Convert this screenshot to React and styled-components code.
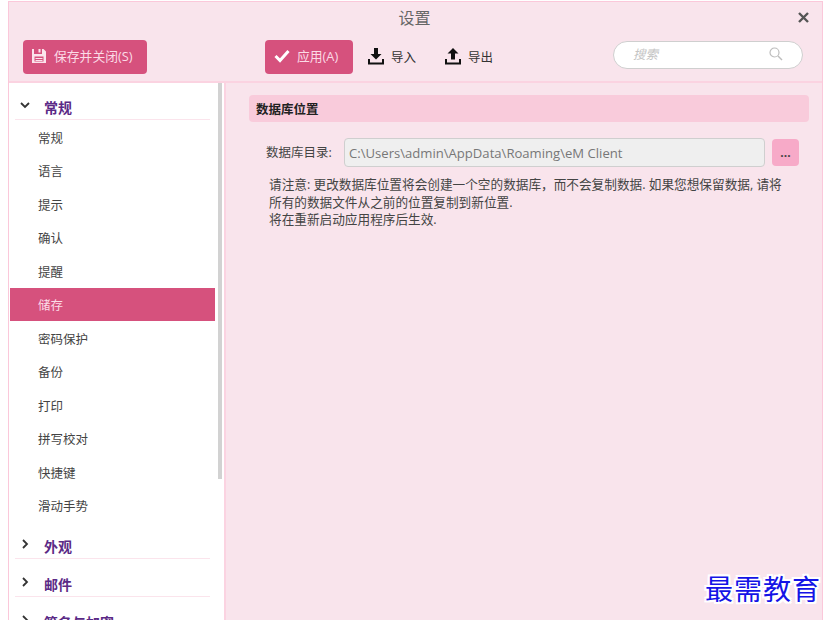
// App.jsx

import React from "react";
import styled, { createGlobalStyle } from "styled-components";

const GlobalStyle = createGlobalStyle`
  html, body {
    margin: 0;
    padding: 0;
    height: 100%;
    overflow: hidden;
    background: #fff;
    font-family: "Open Sans", "Noto Sans CJK SC", sans-serif;
  }
`;

const Page = styled.div`
  width: 829px;
  height: 620px;
  padding: 1px 6px 0 8px;
  box-sizing: border-box;
  overflow: hidden;
  position: relative;
`;

const Window = styled.div`
  height: 640px;
  border: 1px solid #fbc8da;
  background: #f9e4ec;
  display: flex;
  flex-direction: column;
`;

const Header = styled.div`
  height: 79px;
  border-bottom: 2px solid #fbd3e1;
  flex-shrink: 0;
  position: relative;
`;

const Title = styled.div`
  height: 38px;
  padding: 4px 2px 0 0;
  box-sizing: border-box;
  text-align: center;
  font-size: 16px;
  line-height: 24px;
  color: #666;
`;

const Close = styled.svg`
  position: absolute;
  right: 13px;
  top: 10px;
`;

const Toolbar = styled.div`
  display: flex;
  align-items: center;
  height: 34px;
  padding: 0 19px 0 14px;
`;

const PinkButton = styled.div`
  display: flex;
  align-items: center;
  gap: ${(p) => p.$gap}px;
  height: 34px;
  width: ${(p) => p.$width}px;
  padding-left: ${(p) => p.$pad}px;
  padding-bottom: 3px;
  box-sizing: border-box;
  margin-right: ${(p) => p.$right}px;
  background: #d6517d;
  border-radius: 4px;
  color: #fbdbe6;
  font-size: 12.8px;
`;

const PlainButton = styled.div`
  display: flex;
  align-items: center;
  gap: 7px;
  padding-bottom: 2px;
  margin-right: ${(p) => p.$right}px;
  color: #333;
  font-size: 12.5px;
`;

const Search = styled.div`
  margin-left: auto;
  margin-bottom: 5px;
  width: 190px;
  height: 28px;
  box-sizing: border-box;
  border: 1px solid #cfcfcf;
  border-radius: 14px;
  background: #fff;
  display: flex;
  align-items: center;
  justify-content: space-between;
  padding: 0 19px 2px;
  color: #c4c4c4;
  font-size: 12.5px;
  font-style: italic;
`;

const Body = styled.div`
  display: flex;
  flex: 1;
  min-height: 0;
`;

const Sidebar = styled.div`
  width: 215px;
  background: #fff;
  border-right: 2px solid #fbd3e1;
  flex-shrink: 0;
  position: relative;
  padding-top: 12px;
`;

const Scrollbar = styled.div`
  position: absolute;
  left: 209px;
  top: 0;
  width: 4px;
  height: 396px;
  background: #d2d2d2;
`;

const Group = styled.div`
  margin: 0 14px 0 6px;
  height: 25px;
  box-sizing: border-box;
  border-bottom: 1px solid #fbe4ec;
  display: flex;
  align-items: center;
  margin-top: ${(p) => p.$top || 0}px;
  color: #5b2a86;
  font-size: 14px;
  font-weight: 700;
`;

const Chevron = styled.svg`
  width: 10px;
  height: 10px;
  margin: 0 14px 5px 5px;
  flex-shrink: 0;
`;

const Item = styled.div`
  height: 33.5px;
  width: 205px;
  margin-left: 1px;
  padding: 1px 0 0 28px;
  box-sizing: border-box;
  display: flex;
  align-items: center;
  font-size: 12.5px;
  color: ${(p) => (p.$active ? "#fbdbe6" : "#444")};
  background: ${(p) => (p.$active ? "#d6517d" : "transparent")};
`;

const Content = styled.div`
  flex: 1;
  padding: 12px 13px 0 23px;
`;

const SectionHead = styled.div`
  height: 27px;
  background: #f9cbdb;
  border-radius: 4px;
  padding-left: 7px;
  display: flex;
  align-items: center;
  font-size: 12.5px;
  font-weight: 700;
  color: #222;
`;

const PathRow = styled.div`
  display: flex;
  align-items: center;
  margin-top: 16px;
  padding-left: 17px;
  padding-right: 10px;
  font-size: 12.5px;
  color: #444;
`;

const PathLabel = styled.div`
  width: 78px;
  padding-bottom: 2px;
`;

const PathBox = styled.div`
  flex: 1;
  height: 29px;
  box-sizing: border-box;
  border: 1px solid #cfcfcf;
  border-radius: 4px;
  background: #efefef;
  display: flex;
  align-items: center;
  padding-left: 4px;
  color: #777;
  font-size: 13.1px;
`;

const MoreButton = styled.div`
  width: 27px;
  height: 27px;
  margin-left: 7px;
  border-radius: 4px;
  background: #f7aac8;
  text-align: center;
  line-height: 28px;
  font-size: 12px;
  font-weight: 700;
  color: #444;
`;

const Note = styled.div`
  margin: 9px 0 0 20px;
  font-size: 12.65px;
  line-height: 17.5px;
  color: #444;
`;

const Watermark = styled.div`
  position: absolute;
  right: 8px;
  top: 571px;
  font-family: "Noto Sans CJK SC", sans-serif;
  font-size: 28px;
  line-height: 34px;
  letter-spacing: 1px;
  color: #1414e6;
  text-shadow: 2px 0 0 #fff, -2px 0 0 #fff, 0 2px 0 #fff, 0 -2px 0 #fff,
    2px 2px 0 #fff, -2px -2px 0 #fff, 2px -2px 0 #fff, -2px 2px 0 #fff;
`;

const SaveIcon = () => (
  <svg width="16" height="16" viewBox="0 0 16 16">
    <path
      fill="#fbe4ec"
      fillRule="evenodd"
      d="M1 1h2v5h8V1h1.500L15 3.500V15H1zM3.500 8.500V13.500h9V8.500zM7.500 1h2v3.500h-2zM4.500 10h7v1h-7zM4.500 12h7v1h-7z"
    />
  </svg>
);

const CheckIcon = () => (
  <svg width="16" height="14" viewBox="0 0 16 14">
    <path fill="none" stroke="#fff" strokeWidth="3" d="M1.500 7l4.500 4.500L14.500 2" />
  </svg>
);

const DownloadIcon = () => (
  <svg width="16" height="18" viewBox="0 0 16 18">
    <path fill="#111" d="M6 1h4v6h3.500L8 12.500 2.500 7H6zM0 12h2v3.500h12V12h2v5.500H0z" />
  </svg>
);

const UploadIcon = () => (
  <svg width="16" height="18" viewBox="0 0 16 18">
    <path fill="#111" d="M6 12.500h4v-6h3.500L8 1 2.500 6.500H6zM0 12h2v3.500h12V12h2v5.500H0z" />
  </svg>
);

const SearchIcon = () => (
  <svg width="14" height="14" viewBox="0 0 14 14">
    <circle cx="5.500" cy="5.500" r="4.500" fill="none" stroke="#bdbdbd" strokeWidth="1.200" />
    <path stroke="#bdbdbd" strokeWidth="1.400" d="M9 9l4 4" />
  </svg>
);

const ChevronIcon = ({ open }) => (
  <Chevron viewBox="0 0 10 10">
    <path
      fill="none"
      stroke="#333"
      strokeWidth="1.800"
      d={open ? "M1 3l4 4 4-4" : "M3 1l4 4-4 4"}
    />
  </Chevron>
);

const items = ["常规", "语言", "提示", "确认", "提醒", "储存", "密码保护", "备份", "打印", "拼写校对", "快捷键", "滑动手势"];

const App = () => {
  return (
    <Page>
      <GlobalStyle />
      <Window>
        <Header>
          <Title>设置</Title>
          <Close width="11" height="11" viewBox="0 0 11 11">
            <path stroke="#555" strokeWidth="2.400" d="M1 1l9 9M10 1l-9 9" />
          </Close>
          <Toolbar>
            <PinkButton $width={124} $pad={8} $gap={7} $right={118}>
              <SaveIcon />
              保存并关闭(S)
            </PinkButton>
            <PinkButton $width={88} $pad={9} $gap={7} $right={15}>
              <CheckIcon />
              应用(A)
            </PinkButton>
            <PlainButton $right={29}>
              <DownloadIcon />
              导入
            </PlainButton>
            <PlainButton $right={0}>
              <UploadIcon />
              导出
            </PlainButton>
            <Search>
              搜索
              <SearchIcon />
            </Search>
          </Toolbar>
        </Header>
        <Body>
          <Sidebar>
            <Scrollbar />
            <Group>
              <ChevronIcon open />
              常规
            </Group>
            {items.map((name) => (
              <Item key={name} $active={name === "储存"}>
                {name}
              </Item>
            ))}
            <Group $top={12}>
              <ChevronIcon />
              外观
            </Group>
            <Group $top={13}>
              <ChevronIcon />
              邮件
            </Group>
            <Group $top={13}>
              <ChevronIcon />
              签名与加密
            </Group>
          </Sidebar>
          <Content>
            <SectionHead>数据库位置</SectionHead>
            <PathRow>
              <PathLabel>数据库目录:</PathLabel>
              <PathBox>C:\Users\admin\AppData\Roaming\eM Client</PathBox>
              <MoreButton>...</MoreButton>
            </PathRow>
            <Note>
              请注意: 更改数据库位置将会创建一个空的数据库，而不会复制数据. 如果您想保留数据, 请将
              <br />
              所有的数据文件从之前的位置复制到新位置.
              <br />
              将在重新启动应用程序后生效.
            </Note>
          </Content>
        </Body>
      </Window>
      <Watermark>最需教育</Watermark>
    </Page>
  );
};

export default App;
